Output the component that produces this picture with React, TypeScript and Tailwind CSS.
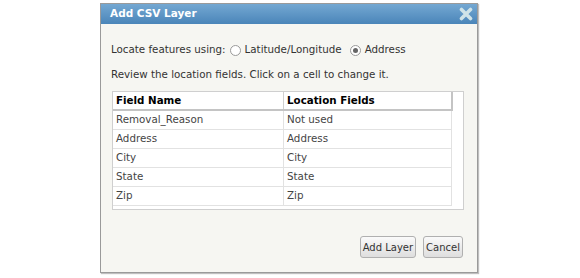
const rows = [
  ['Removal_Reason', 'Not used'],
  ['Address', 'Address'],
  ['City', 'City'],
  ['State', 'State'],
  ['Zip', 'Zip'],
];

function Radio({ checked }: { checked?: boolean }) {
  return (
    <span className="inline-flex items-center justify-center w-[11px] h-[11px] rounded-full border border-[#9a9a9a] bg-white mr-[4px]">
      {checked && <span className="w-[5px] h-[5px] rounded-full bg-[#666]" />}
    </span>
  );
}

export default function App() {
  return (
    <div className="w-[580px] h-[278px] bg-white pt-[3px] pl-[100px] font-['DejaVu_Sans',Verdana,sans-serif]">
      <div className="w-[378px] h-[270px] border border-[#9a9a9a] bg-[#f6f6f2] flex flex-col shadow-[1px_1px_1px_rgba(0,0,0,0.25)]">
        <div className="h-[20px] bg-gradient-to-b from-[#74a8d2] to-[#4a85b9] flex items-center justify-between pl-[9px] pr-[4px]">
          <span className="text-white font-bold text-[10.5px]">Add CSV Layer</span>
          <svg width="14" height="14" viewBox="0 0 14 14">
            <path d="M2.5 2.5 L11.5 11.5 M11.5 2.5 L2.5 11.5" stroke="#cfe3e8" strokeWidth="3.6" strokeLinecap="round" />
          </svg>
        </div>
        <div className="px-[10px] pt-[19px] text-[10.3px] text-[#333] flex-1 flex flex-col">
          <div className="flex items-center h-[14px]">
            <span className="mr-[4px]">Locate features using:</span>
            <Radio />
            <span className="mr-[8px]">Latitude/Longitude</span>
            <Radio checked />
            <span>Address</span>
          </div>
          <div className="mt-[10px] h-[14px]">Review the location fields. Click on a cell to change it.</div>
          <div className="mt-[10px] ml-[1px] w-[352px] border border-[#cfcfcf] bg-white pb-[3px]">
            <div className="flex h-[19px] mr-[10px] border-b-[2px] border-r-[2px] border-[#c4c4c4] bg-white">
              <div className="w-[171px] pl-[3px] flex items-center font-bold text-black border-r border-[#d0d0d0]">Field Name</div>
              <div className="flex-1 pl-[3px] flex items-center font-bold text-black">Location Fields</div>
            </div>
            {rows.map(([a, b]) => (
              <div key={a} className="flex h-[19px] mr-[11px] border-b border-r border-[#e2e2e2]">
                <div className="w-[171px] pl-[3px] flex items-center text-[#444] border-r border-[#e2e2e2]">{a}</div>
                <div className="flex-1 pl-[3px] flex items-center text-[#444]">{b}</div>
              </div>
            ))}
          </div>
          <div className="mt-auto mb-[14px] flex justify-end gap-[7px] mr-[4px]">
            <button className="h-[22px] px-[2px] rounded-[3px] border border-[#b0b0b0] bg-gradient-to-b from-[#fafafa] to-[#dedede] text-[10px] text-[#333]">Add Layer</button>
            <button className="h-[22px] px-[2px] rounded-[3px] border border-[#b0b0b0] bg-gradient-to-b from-[#fafafa] to-[#dedede] text-[10px] text-[#333]">Cancel</button>
          </div>
        </div>
      </div>
    </div>
  );
}
